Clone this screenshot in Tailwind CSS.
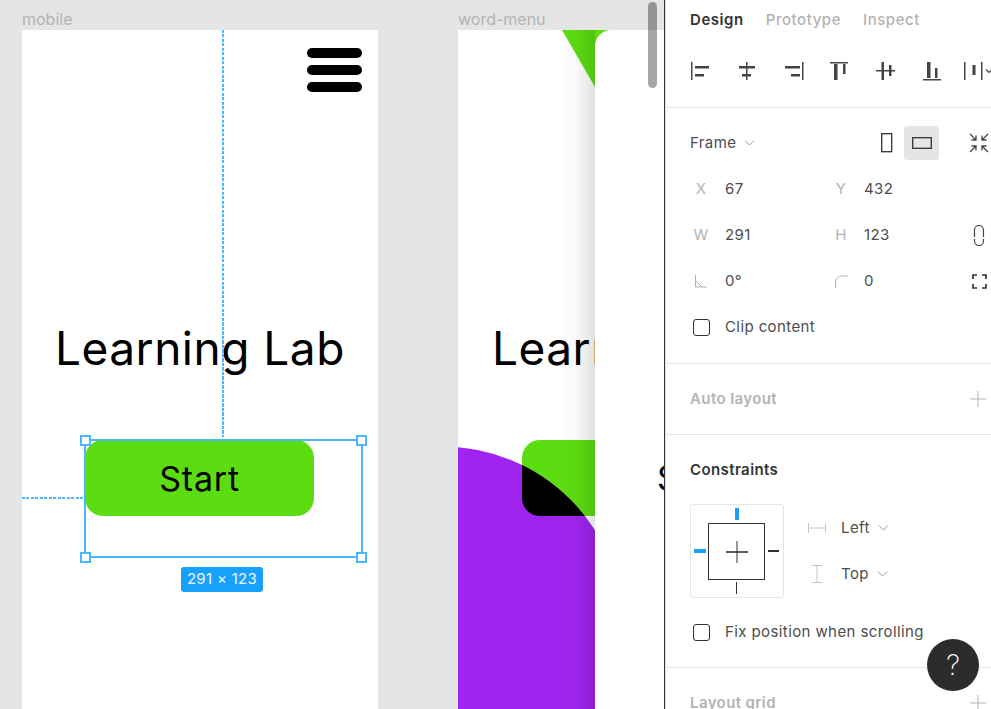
<!DOCTYPE html>
<html lang="en">
<head>
  <meta charset="UTF-8" />
  <title>Learning Lab - Design</title>
  <script src="https://cdn.jsdelivr.net/npm/@tailwindcss/browser@4"></script>
</head>
<body class="bg-[#e5e5e5]">
  <div class="relative flex w-[991px] h-[709px] overflow-hidden font-['Inter',sans-serif] text-[15px] text-[#4d4d4d]">

    <!-- Canvas -->
    <main class="relative w-[664px] h-full overflow-hidden bg-[#e5e5e5]">
      <span class="absolute left-[22px] top-[10px] text-[16px] leading-[18px] text-[#b3b3b3]">mobile</span>
      <span class="absolute left-[458px] top-[10px] text-[16px] leading-[18px] text-[#b3b3b3]">word-menu</span>

      <!-- mobile frame -->
      <section class="absolute left-[22px] top-[30px] w-[356px] h-[679px] bg-white">
        <div class="absolute left-[285px] top-[18px] flex w-[55px] flex-col gap-[7px]">
          <div class="h-[10px] rounded-full bg-black"></div>
          <div class="h-[10px] rounded-full bg-black"></div>
          <div class="h-[10px] rounded-full bg-black"></div>
        </div>
        <h1 class="absolute left-[33px] top-[289px] text-[46px] leading-[58px] tracking-[0.5px] text-black whitespace-nowrap">Learning Lab</h1>
        <div class="absolute left-[63px] top-[410px] flex h-[76px] w-[229px] items-center justify-center rounded-[18px] bg-[#5cdd11] text-[34px] tracking-[0.8px] text-black">Start</div>
      </section>

      <!-- selection overlay on mobile frame -->
      <div class="absolute left-[222px] top-[30px] h-[407px] w-[2px] bg-[repeating-linear-gradient(to_bottom,#4db5fb_0,#4db5fb_3px,transparent_3px,transparent_4.5px)]"></div>
      <div class="absolute left-[22px] top-[497px] h-[2px] w-[62px] bg-[repeating-linear-gradient(to_right,#4db5fb_0,#4db5fb_3px,transparent_3px,transparent_4.5px)]"></div>
      <div class="absolute left-[84px] top-[439px] h-[119px] w-[279px] border-2 border-[#4db5fb]"></div>
      <div class="absolute left-[80px] top-[435px] size-[11px] border-2 border-[#4db5fb] bg-white"></div>
      <div class="absolute left-[356px] top-[435px] size-[11px] border-2 border-[#4db5fb] bg-white"></div>
      <div class="absolute left-[80px] top-[552px] size-[11px] border-2 border-[#4db5fb] bg-white"></div>
      <div class="absolute left-[356px] top-[552px] size-[11px] border-2 border-[#4db5fb] bg-white"></div>
      <div class="absolute left-[181px] top-[567px] flex h-[25px] w-[82px] items-center justify-center rounded-[3px] bg-[#18a0fb] text-[15px] tracking-[0.3px] text-white/90">291 × 123</div>

      <!-- word-menu frame -->
      <section class="absolute left-[458px] top-[30px] w-[206px] h-[679px] overflow-hidden bg-white">
        <h2 class="absolute left-[34px] top-[289px] w-[103px] overflow-hidden text-[46px] leading-[58px] tracking-[0.5px] text-black whitespace-nowrap">Learning Lab</h2>
        <svg class="absolute left-0 top-0" width="206" height="679" viewBox="458 30 206 679">
          <defs>
            <clipPath id="menuCircle"><circle cx="442.3" cy="627.5" r="181"></circle></clipPath>
          </defs>
          <path d="M562 30H664V87H595Z" fill="#5cdd11"></path>
          <rect x="522" y="440" width="229" height="76" rx="18" fill="#5cdd11"></rect>
          <circle cx="442.3" cy="627.5" r="181" fill="#a024ef"></circle>
          <rect x="522" y="440" width="229" height="76" rx="18" fill="#000" clip-path="url(#menuCircle)"></rect>
          <rect x="458" y="560" width="206" height="149" fill="#a024ef"></rect>
        </svg>
        <div class="absolute left-[102px] top-0 h-full w-[35px] bg-gradient-to-r from-black/0 via-black/3 to-black/12"></div>
        <div class="absolute left-[137px] top-0 h-full w-[69px] rounded-tl-[16px] bg-white"></div>
        <span class="absolute left-[199px] top-[425px] w-[7px] overflow-hidden text-[34px] leading-[46px] text-black">Start</span>
      </section>

      <div class="absolute left-[648px] top-[2px] h-[86px] w-[9px] rounded-full bg-black/35"></div>
    </main>

    <!-- Right panel -->
    <aside class="relative w-[327px] h-full shrink-0 border-l border-[#333] bg-white tracking-[0.4px]">
      <div class="h-full border-l border-[#e5e5e5]">

        <div class="h-[108px] border-b border-[#e5e5e5]">
          <nav class="flex h-[40px] items-center gap-[22px] pl-[24px] font-medium tracking-[0.55px]">
            <span class="font-semibold text-[#333]">Design</span>
            <span class="text-[#b3b3b3]">Prototype</span>
            <span class="text-[#b3b3b3]">Inspect</span>
          </nav>
          <svg class="mt-[13px]" width="325" height="30" viewBox="666 53 325 30" fill="#444">
            <rect x="691" y="62" width="1.5" height="18"></rect><rect x="695" y="66" width="14" height="2.5"></rect><rect x="695" y="74" width="9" height="2.5"></rect>
            <rect x="746" y="62" width="1.5" height="18"></rect><rect x="739" y="66" width="16" height="2.5"></rect><rect x="742" y="74" width="9" height="2.5"></rect>
            <rect x="802" y="62" width="1.5" height="18"></rect><rect x="785" y="66" width="15" height="2.5"></rect><rect x="791" y="74" width="9" height="2.5"></rect>
            <rect x="830" y="62" width="18" height="1.5"></rect><rect x="834" y="64" width="3.5" height="16"></rect><rect x="843" y="64" width="2.5" height="10"></rect>
            <rect x="876" y="70" width="19" height="1.5"></rect><rect x="881.5" y="62" width="2.5" height="18"></rect><rect x="889" y="65" width="2.5" height="11"></rect>
            <rect x="923" y="79" width="18" height="1.5"></rect><rect x="927" y="62" width="3.5" height="16"></rect><rect x="935" y="68" width="2.5" height="10"></rect>
            <rect x="964" y="62" width="1.5" height="18"></rect><rect x="972.5" y="65" width="3" height="10"></rect><rect x="981" y="62" width="1.5" height="18"></rect>
            <path d="M986 69.5l3 3 2 -2" fill="none" stroke="#444" stroke-width="1.2"></path>
          </svg>
        </div>

        <div class="h-[256px] border-b border-[#e5e5e5] pt-[18px]">
          <div class="flex h-[34px] items-center pl-[24px]">
            <span>Frame</span>
            <svg class="ml-[8px]" width="11" height="6" viewBox="0 0 11 6" fill="none" stroke="#999"><path d="M1 .5l4.5 4.5 4.5-4.5"></path></svg>
            <svg class="ml-[126px]" width="12" height="20" viewBox="0 0 12 20" fill="none" stroke="#333" stroke-width="1.3"><rect x=".7" y=".7" width="10" height="18"></rect></svg>
            <div class="ml-[11px] flex h-[34px] w-[35px] items-center justify-center rounded-[3px] bg-[#e5e5e5]">
              <svg width="20" height="12" viewBox="0 0 20 12" fill="none" stroke="#333" stroke-width="1.3"><rect x=".7" y=".7" width="18.6" height="10.6"></rect></svg>
            </div>
            <svg class="ml-[29px]" width="22" height="22" viewBox="0 0 22 22" fill="none" stroke="#444" stroke-width="1.3">
              <path d="M2 2l5.500 5.500M8 3.500V8H3.500M20 2l-5.500 5.500M14 3.500V8h4.500M2 20l5.500-5.500M8 18.500V14H3.500M20 20l-5.500-5.500M14 18.500V14h4.500"></path>
            </svg>
          </div>

          <div class="mt-[6px] flex h-[46px] items-center pl-[24px]">
            <span class="w-[22px] text-center text-[#b3b3b3]">X</span><span class="ml-[13px] w-[105px]">67</span>
            <span class="w-[22px] text-center text-[#b3b3b3]">Y</span><span class="ml-[12px]">432</span>
          </div>
          <div class="flex h-[46px] items-center pl-[24px]">
            <span class="w-[22px] text-center text-[#b3b3b3]">W</span><span class="ml-[13px] w-[105px]">291</span>
            <span class="w-[22px] text-center text-[#b3b3b3]">H</span><span class="ml-[12px] w-[109px]">123</span>
            <svg width="12" height="21" viewBox="0 0 12 21" fill="none" stroke="#444" stroke-width="1.2"><path d="M1.500 12V5a4.500 4.500 0 0 1 9 0v7M1.500 14v2a4.500 4.500 0 0 0 9 0v-2"></path></svg>
          </div>
          <div class="flex h-[46px] items-center pl-[24px]">
            <span class="flex w-[22px] justify-center">
              <svg width="14" height="14" viewBox="0 0 14 14" fill="none" stroke="#b3b3b3"><path d="M1.500 1v12H13M1.500 6.500 8 13"></path></svg>
            </span>
            <span class="ml-[13px] w-[105px]">0°</span>
            <span class="flex w-[22px] justify-center">
              <svg width="14" height="14" viewBox="0 0 14 14" fill="none" stroke="#b3b3b3"><path d="M1.500 14V8a6 6 0 0 1 6-6H14"></path></svg>
            </span>
            <span class="ml-[12px] w-[108px]">0</span>
            <svg width="15" height="15" viewBox="0 0 15 15" fill="none" stroke="#333" stroke-width="1.7"><path d="M1 5V1h4M10 1h4v4M14 10v4h-4M5 14H1v-4"></path></svg>
          </div>
          <div class="flex h-[46px] items-center pl-[27px]">
            <span class="size-[17px] rounded-[3px] border border-[#333]"></span><span class="ml-[15px]">Clip content</span>
          </div>
        </div>

        <div class="flex h-[71px] items-center justify-between border-b border-[#e5e5e5] pl-[24px] pr-[5px]">
          <span class="font-semibold text-[#b3b3b3]">Auto layout</span>
          <svg width="16" height="16" viewBox="0 0 16 16" stroke="#b3b3b3"><path d="M8 0v16M0 8h16"></path></svg>
        </div>

        <div class="h-[233px] border-b border-[#e5e5e5] pl-[24px]">
          <h3 class="flex h-[69px] items-center pt-[2px] font-semibold text-[#333]">Constraints</h3>
          <div class="flex">
            <div class="relative h-[94px] w-[94px] rounded-[3px] border border-[#e5e5e5]">
              <div class="absolute left-[44px] top-[3px] h-[12px] w-[4px] bg-[#18a0fb]"></div>
              <div class="absolute left-[3px] top-[44px] h-[4px] w-[12px] bg-[#18a0fb]"></div>
              <div class="absolute right-[4px] top-[45px] h-[2px] w-[11px] bg-[#333]"></div>
              <div class="absolute bottom-[3px] left-[45px] h-[12px] w-[1px] bg-[#333]"></div>
              <div class="absolute left-[17px] top-[18px] flex size-[57px] items-center justify-center border border-[#333]">
                <svg width="22" height="22" viewBox="0 0 22 22" stroke="#333"><path d="M11 0v22" stroke-width="1"></path><path d="M0 11h22" stroke-width="1.6"></path></svg>
              </div>
            </div>
            <div class="ml-[24px] flex flex-col pt-[1px]">
              <div class="flex h-[46px] items-center">
                <svg width="18" height="10" viewBox="0 0 18 10" fill="none" stroke="#c4c4c4"><path d="M.5 0v10M17.500 0v10M.5 5h17"></path></svg>
                <span class="ml-[15px]">Left</span>
                <svg class="ml-[8px]" width="11" height="6" viewBox="0 0 11 6" fill="none" stroke="#999"><path d="M1 .5l4.500 4.500 4.500-4.500"></path></svg>
              </div>
              <div class="flex h-[46px] items-center">
                <svg class="ml-[4px]" width="10" height="18" viewBox="0 0 10 18" fill="none" stroke="#c4c4c4"><path d="M0 .5h10M0 17.500h10M5 .5v17"></path></svg>
                <span class="ml-[19px]">Top</span>
                <svg class="ml-[8px]" width="11" height="6" viewBox="0 0 11 6" fill="none" stroke="#999"><path d="M1 .5l4.500 4.500 4.500-4.500"></path></svg>
              </div>
            </div>
          </div>
          <div class="mt-[11px] flex h-[46px] items-center pl-[3px]">
            <span class="size-[17px] rounded-[3px] border border-[#333]"></span><span class="ml-[15px]">Fix position when scrolling</span>
          </div>
        </div>

        <div class="flex h-[70px] items-center justify-between pl-[24px] pr-[5px]">
          <span class="font-semibold text-[#b3b3b3]">Layout grid</span>
          <svg width="16" height="16" viewBox="0 0 16 16" stroke="#b3b3b3"><path d="M8 0v16M0 8h16"></path></svg>
        </div>
      </div>

      <button class="absolute left-[262px] top-[639px] flex size-[52px] items-center justify-center rounded-full bg-[#2c2c2c] text-[28px] font-extralight tracking-normal text-white">?</button>
    </aside>
  </div>
</body>
</html>
